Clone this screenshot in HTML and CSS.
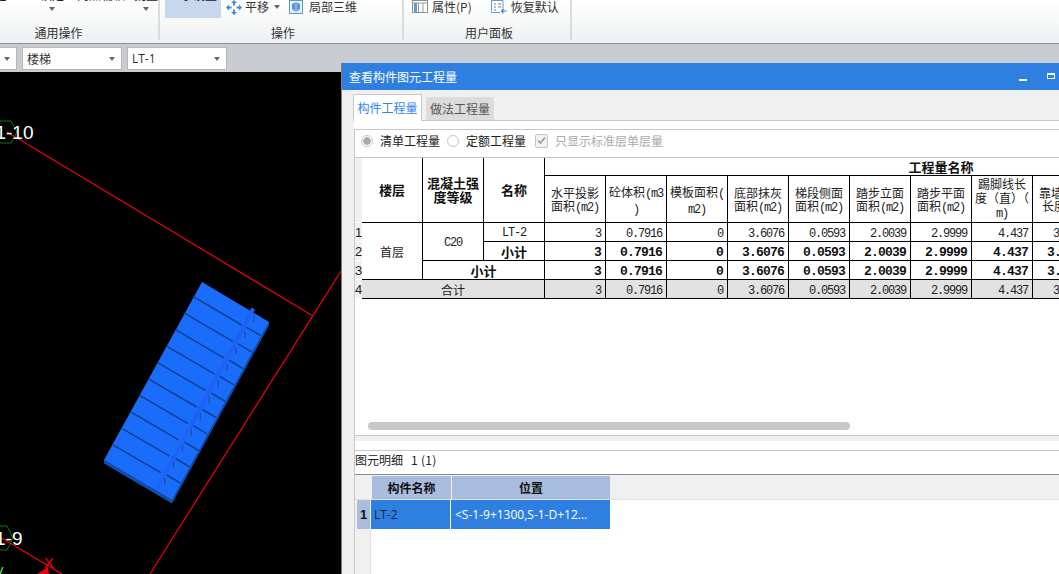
FILE: index.html
```html
<!DOCTYPE html>
<html lang="zh-CN">
<head>
<meta charset="utf-8">
<title>查看构件图元工程量</title>
<link rel="stylesheet" href="styles.css">
</head>
<body>
<div class="app">
  <header class="ribbon">
    <section class="group group-common">
      <div class="group-items clip-row">
        <div class="clip-item w-first"><span class="clip-text">定义</span></div>
        <div class="clip-item w-two"><span class="clip-text">锁定</span><i class="caret"></i></div>
        <div class="clip-item w-four"><span class="clip-text">两点辅轴</span></div>
        <div class="clip-item w-two"><span class="clip-text">批量</span><i class="caret"></i></div>
      </div>
      <div class="group-label">通用操作</div>
    </section>
    <section class="group group-ops">
      <div class="group-items">
        <div class="active-tool"><span class="clip-text">显示设置</span></div>
        <svg class="icon icon-move" width="16" height="15" viewBox="0 0 16 15"><path d="M8 0l3 3H5zM8 15l-3-3h6zM0 7.500l3-3v6zM16 7.500l-3 3v-6z" fill="#3f8ad6"/><path d="M8 3v2.500M8 9.500V12M3 7.500h2.500M10.500 7.500H13" stroke="#3f8ad6" stroke-width="2"/></svg>
        <span class="tool-text">平移</span>
        <i class="caret caret-inline"></i>
        <svg class="icon icon-local" width="14" height="14" viewBox="0 0 14 14"><rect x=".5" y=".5" width="13" height="13" fill="#e6f0fb" stroke="#5b9bd5"/><path d="M7 2l4 2v5l-4 3-4-3V4z" fill="#5b9bd5"/><path d="M7 2v10" stroke="#cfe2f6" stroke-width=".7"/></svg>
        <span class="tool-text">局部三维</span>
      </div>
      <div class="group-label">操作</div>
    </section>
    <section class="group group-panel">
      <div class="group-items">
        <svg class="icon icon-prop" width="16" height="13" viewBox="0 0 16 13"><rect x=".5" y=".5" width="15" height="12" fill="#fff" stroke="#8d8d8d"/><rect x="2" y="3" width="3" height="9" fill="#5b9bd5"/><path d="M1 3h14M6.500 3v9M11 3v9" stroke="#9a9a9a"/></svg>
        <span class="tool-text">属性(P)</span>
        <svg class="icon icon-reset" width="16" height="14" viewBox="0 0 16 14"><path d="M12 9V.5H.5v12H9" fill="#fff" stroke="#5b9bd5"/><path d="M3 4h2M7 4h3M3 7h2M7 7h3M3 10h2" stroke="#777"/><path d="M15.500 11H10.500M12.500 9l-2 2 2 2" fill="none" stroke="#2e7fe0" stroke-width="1.200"/></svg>
        <span class="tool-text">恢复默认</span>
      </div>
      <div class="group-label">用户面板</div>
    </section>
  </header>

  <div class="toolbar">
    <div class="combo combo-first"><i class="caret"></i></div>
    <div class="combo"><span>楼梯</span><i class="caret"></i></div>
    <div class="combo"><span class="latin">LT-1</span><i class="caret"></i></div>
  </div>

  <main class="canvas">
    <svg class="scene" width="341" height="502" viewBox="0 72 341 502">
      <path d="M7 132L313 316M341 271L150 574M0 537L62 574" fill="none" stroke="#f00012" stroke-width="1.200"/>
      <path d="M11 121L17 132L11 143H-1L-7 132L-1 121Z" fill="none" stroke="#0a7a12"/>
      <path d="M7 526L13 538L7 550H-5L-11 538L-5 526Z" fill="none" stroke="#0a7a12"/>
      <text class="axis" x="33.500" y="139" text-anchor="end">1-10</text>
      <text class="axis" x="22.500" y="545" text-anchor="end">1-9</text>
      <text class="axis-x" x="44" y="568">X</text>
      <path d="M48 567L37 574H49Z" fill="#f00012"/>
      <path d="M3 567L0 574" stroke="#35e020" stroke-width="1.500"/>
      <path d="M104 460L172 500L269 322V325.500L172 503.500L104 463.500Z" fill="#0f4fae"/>
      <path d="M202 282L269 322L172 500L104 460Z" fill="#1a6dfb"/>
      <path d="M193.300 296.700L241.700 325M184.400 313.200L232.700 341.400M175.500 329.700L223.700 357.800M166.600 346.200L214.700 374.200M157.700 362.700L205.700 390.600M148.900 379.200L196.700 407M140 395.700L187.700 423.400M131.100 412.200L178.700 439.800M122.200 428.700L169.700 456.200M113.300 445.200L160.700 472.600M246.700 327.300L260.700 335.700M237.800 343.700L251.800 352.100M228.900 360.100L242.900 368.500M220 376.500L234 384.900M211.100 392.900L225.100 401.300M202.200 409.300L216.200 417.700M193.300 425.700L207.300 434.100M184.400 442.100L198.400 450.500M175.500 458.500L189.500 466.900M166.600 474.900L180.600 483.300" fill="none" stroke="#0d408f" stroke-width="1.500"/>
      <path d="M253.700 315v6.700M244.800 331.300v6.700M235.900 347.600v6.700M227 363.900v6.700M218.100 380.200v6.700M209.200 396.500v6.700M200.300 412.800v6.700M191.400 429.100v6.700M182.500 445.400v6.700M173.600 461.700v6.700M164.700 478v6.700" fill="none" stroke="#1c4f96" stroke-width="1.200"/>
      <path d="M251.500 307.500L255 309.500L158 490.500L155.500 489Z" fill="#1f60f6"/>
    </svg>
  </main>

  <section class="window">
    <div class="win-title">
      <span>查看构件图元工程量</span>
      <span class="win-controls"><i class="win-min"></i><i class="win-max"></i></span>
    </div>
    <div class="win-body">
      <div class="tabs">
        <div class="tab tab-active">构件工程量</div>
        <div class="tab">做法工程量</div>
      </div>
      <div class="tab-panel">
        <div class="sheet">
          <div class="options">
            <label class="opt"><i class="radio radio-on"></i>清单工程量</label>
            <label class="opt"><i class="radio"></i>定额工程量</label>
            <label class="opt opt-off"><i class="check"><svg width="11" height="11" viewBox="0 0 11 11"><path d="M2 5.500L4.500 8L9 2.500" fill="none" stroke="#9a9a9a" stroke-width="1.600"/></svg></i>只显示标准层单层量</label>
          </div>
          <div class="grid-wrap">
            <table class="qty">
              <colgroup><col class="col-rn"><col class="col-c" span="16"></colgroup>
              <tr class="h1">
                <td class="rn" rowspan="2"></td>
                <th rowspan="2">楼层</th>
                <th rowspan="2">混凝土强<br>度等级</th>
                <th rowspan="2">名称</th>
                <th colspan="13">工程量名称</th>
              </tr>
              <tr class="h2">
                <td>水平投影<br>面积<span class="lat">(m2)</span></td>
                <td>砼体积<span class="lat">(m3</span><br><span class="lat">)</span></td>
                <td>模板面积<span class="lat">(</span><br><span class="lat">m2)</span></td>
                <td>底部抹灰<br>面积<span class="lat">(m2)</span></td>
                <td>梯段侧面<br>面积<span class="lat">(m2)</span></td>
                <td>踏步立面<br>面积<span class="lat">(m2)</span></td>
                <td>踏步平面<br>面积<span class="lat">(m2)</span></td>
                <td class="tall">踢脚线长<br>度（直）（<br><span class="lat">m)</span></td>
                <td>靠墙扶手<br>长度<span class="lat">(m)</span></td>
                <td colspan="4"></td>
              </tr>
              <tr class="r">
                <td class="rn">1</td>
                <td class="cn" rowspan="3">首层</td>
                <td class="lat cen" rowspan="2">C20</td>
                <td class="lat cen">LT-2</td>
                <td class="num">3</td><td class="num">0.7916</td><td class="num">0</td><td class="num">3.6076</td><td class="num">0.0593</td><td class="num">2.0039</td><td class="num">2.9999</td><td class="num">4.437</td><td class="num">3.0000</td><td colspan="4"></td>
              </tr>
              <tr class="r b">
                <td class="rn">2</td>
                <th>小计</th>
                <td class="num">3</td><td class="num">0.7916</td><td class="num">0</td><td class="num">3.6076</td><td class="num">0.0593</td><td class="num">2.0039</td><td class="num">2.9999</td><td class="num">4.437</td><td class="num">3.0000</td><td colspan="4"></td>
              </tr>
              <tr class="r b">
                <td class="rn">3</td>
                <th colspan="2">小计</th>
                <td class="num">3</td><td class="num">0.7916</td><td class="num">0</td><td class="num">3.6076</td><td class="num">0.0593</td><td class="num">2.0039</td><td class="num">2.9999</td><td class="num">4.437</td><td class="num">3.0000</td><td colspan="4"></td>
              </tr>
              <tr class="r total">
                <td class="rn">4</td>
                <td class="cn" colspan="3">合计</td>
                <td class="num">3</td><td class="num">0.7916</td><td class="num">0</td><td class="num">3.6076</td><td class="num">0.0593</td><td class="num">2.0039</td><td class="num">2.9999</td><td class="num">4.437</td><td class="num">3.0000</td><td colspan="4"></td>
              </tr>
            </table>
            <div class="scrollbar"></div>
          </div>
          <div class="band"></div>
          <div class="spacer"></div>
          <div class="detail-title"><span>图元明细</span><span class="detail-count">1 (1)</span></div>
          <div class="detail">
            <div class="d-corner"></div>
            <div class="d-head"><b>构件名称</b></div>
            <div class="d-head"><b>位置</b></div>
            <div class="d-fill"></div>
            <div class="d-rownum"><b>1</b></div>
            <div class="d-cell d-name">LT-2</div>
            <div class="d-cell d-pos">&lt;S-1-9+1300,S-1-D+12...</div>
            <div class="d-blank"></div>
            <div class="d-stripe"></div>
          </div>
        </div>
      </div>
    </div>
  </section>
</div>
</body>
</html>
```

FILE: styles.css
```css
* { box-sizing: border-box; }
html, body { margin: 0; padding: 0; height: 100%; overflow: hidden; }
body { font-family: "Noto Sans CJK SC", "Liberation Sans", sans-serif; font-size: 12px; color: #222; }
i { display: block; font-style: normal; }

.app { position: relative; width: 1059px; height: 574px; overflow: hidden; display: flex; flex-direction: column; background: #000; }

/* ribbon */
.ribbon { height: 44px; flex: none; display: flex; background: linear-gradient(#ffffff, #eef0f1); border-bottom: 1px solid #8e9194; overflow: hidden; }
.group { height: 40px; flex: none; display: flex; flex-direction: column; border-right: 2px solid #d9dbdd; }
.group-common { width: 201px; margin-left: -41px; }
.group-ops { width: 244px; }
.group-panel { width: 168px; }
.group-items { height: 25px; display: flex; align-items: flex-start; line-height: 13px; overflow: hidden; }
.group-label { text-align: center; line-height: 15px; color: #333; }
.group-ops .group-label, .group-panel .group-label { padding-left: 4px; }

.clip-row { padding-left: 25px; }
.clip-item { display: flex; flex-direction: column; align-items: center; }
.clip-text { display: block; margin-top: -12px; white-space: nowrap; color: #222; }
.w-first { width: 48px; }
.w-two { width: 24px; margin-left: 11px; }
.w-two:last-child { margin-left: 9px; }
.w-four { width: 48px; margin-left: 13px; }
.caret { width: 0; height: 0; border: 3.500px solid transparent; border-top: 4px solid #666; border-bottom: 0; margin-top: 6px; }

.group-ops .group-items { padding-left: 5px; }
.active-tool { width: 56px; height: 18px; background: #c6d7ee; text-align: center; overflow: hidden; flex: none; }
.icon { flex: none; display: block; }
.icon-move { margin: 0 3px 0 5px; }
.tool-text { white-space: nowrap; color: #333; }
.caret-inline { margin: 5px 0 0 5px; }
.icon-local { margin: 0 6px 0 9px; }
.group-panel .group-items { padding-left: 8px; }
.icon-prop { margin-right: 4px; }
.icon-reset { margin: 0 4px 0 19px; }

/* toolbar */
.toolbar { height: 28px; flex: none; display: flex; gap: 5px; padding-top: 3px; background: #c9ccd1; align-items: flex-start; }
.combo { width: 100px; height: 23px; padding: 0 4px; background: #fff; border: 1px solid #b5b7ba; display: flex; align-items: center; justify-content: space-between; line-height: 21px; color: #333; }
.combo .caret { margin: 0 2px 0 0; }
.combo-first { width: 17px; border-left: 0; justify-content: flex-end; }
.latin { font-family: "Open Sans", sans-serif; }

/* canvas */
.canvas { flex: 1; background: #000; overflow: hidden; }
.scene { display: block; }
.axis { font-family: "Liberation Sans", sans-serif; font-size: 19px; fill: #fff; }
.axis-x { font-family: "Liberation Sans", sans-serif; font-size: 15px; fill: #f00012; }

/* window */
.window { position: absolute; left: 341px; top: 63px; width: 718px; height: 511px; display: flex; flex-direction: column; background: #f0f0f0; border-left: 1px solid #7d7d7d; overflow: hidden; }
.win-title { height: 27px; flex: none; display: flex; align-items: center; justify-content: space-between; padding-left: 7px; background: #2e7fe0; color: #fff; }
.win-controls { display: flex; align-items: flex-start; gap: 20px; padding-right: 4px; }
.win-min { width: 8px; height: 2px; background: #fff; margin-top: 6px; }
.win-max { width: 8px; height: 6px; border: 1px solid #fff; border-top-width: 2px; }
.win-body { flex: 1; display: flex; flex-direction: column; padding-left: 12px; min-height: 0; }
.tabs { height: 30px; flex: none; display: flex; align-items: flex-end; gap: 4px; margin-left: -1px; }
.tab { width: 68px; height: 23px; background: #dcdcdc; color: #555; text-align: center; line-height: 23px; border-radius: 2px 2px 0 0; }
.tab-active { width: 69px; height: 27px; margin-bottom: -1px; position: relative; background: #fff; color: #2e86ee; line-height: 25px; border: 1px solid #c8c8c8; border-bottom: 0; }
.tab-panel { flex: 1; display: flex; flex-direction: column; min-height: 0; background: #fff; border-top: 1px solid #c8c8c8; padding-top: 8px; }
.sheet { flex: 1; display: flex; flex-direction: column; min-height: 0; border-top: 1px solid #c8c8c8; border-left: 1px solid #c8c8c8; }

.options { height: 27px; flex: none; display: flex; align-items: center; padding: 0 0 6px 6px; }
.opt { display: flex; align-items: center; color: #222; }
.radio { width: 12px; height: 12px; margin-right: 7px; border-radius: 50%; border: 1px solid #c4c4c4; background: #fff; }
.radio-on { background: radial-gradient(circle, #a8a8a8 0 3.500px, #fff 4px); }
.opt + .opt { margin-left: 7px; }
.opt + .opt-off { margin-left: 9px; color: #aaa; }
.check { width: 13px; height: 14px; margin-right: 7px; border: 1px solid #c4c4c4; border-radius: 2px; background: #f2f2f2; display: flex; align-items: center; justify-content: center; }

.grid-wrap { height: 279px; flex: none; display: flex; flex-direction: column; border-top: 1px solid #c8c8c8; border-bottom: 1px solid #c8c8c8; overflow: hidden; }
.qty { flex: none; table-layout: fixed; width: 983px; border-collapse: separate; border-spacing: 0; font-family: "Liberation Mono", "Noto Sans CJK SC", monospace; font-size: 12px; color: #222; }
.col-rn { width: 7px; }
.col-c { width: 61px; }
.qty td, .qty th { padding: 0; border-right: 1px solid #000; border-bottom: 1px solid #000; text-align: center; vertical-align: middle; overflow: visible; }
.qty th { font-family: "Noto Sans CJK SC", sans-serif; font-size: 13px; font-weight: 700; line-height: 14px; color: #111; }
.h1 { height: 18px; }
.h2 { height: 47px; }
.h2 td { line-height: 13px; padding-top: 3px; font-family: "Noto Sans CJK SC", sans-serif; white-space: nowrap; }
.qty .h2 td.tall { line-height: 14px; padding-top: 0; }
.r { height: 19px; }
.r td, .r th { line-height: 14px; }
.qty .r td { padding-top: 2px; }
.qty .r th, .qty .r td.cn { padding-top: 1px; }
.qty .r td.num { padding-top: 3px; }
.qty td.rn { border-right: 0; border-bottom: 1px solid #fff; background: #f0f0f0; text-align: left; font-family: "Liberation Sans", sans-serif; font-size: 13px; overflow: hidden; }
.qty .r td.rn { padding-top: 1px; }
.cn { font-family: "Noto Sans CJK SC", sans-serif; }
.lat { font-family: "Liberation Mono", monospace; letter-spacing: -1.200px; }
.qty td.num { text-align: right; padding-right: 4px; letter-spacing: -1.200px; }
.qty .b .num { font-size: 13px; font-weight: 700; color: #111; letter-spacing: -0.800px; }
.total td { background: #e2e2e2; }
.qty .total td.rn { background: #f0f0f0; }

.scrollbar { flex: none; width: 482px; height: 8px; margin: auto 0 5px 13px; border-radius: 4px; background: #c8c8c8; }
.band { height: 5px; flex: none; background: #f0f0f0; }
.spacer { height: 9px; flex: none; background: #fff; }
.detail-title { height: 24px; flex: none; display: flex; align-items: center; gap: 8px; padding: 0 0 6px 0; border-top: 1px solid #c8c8c8; }
.detail-count { letter-spacing: .3px; }
.detail { flex: 1; display: grid; grid-template-columns: 16px 80px 159px 1fr; grid-template-rows: 25px 30px 1fr; border-top: 1px solid #7f8a99; min-height: 0; }
.d-corner, .d-head, .d-fill { background: #f0f0f0; border-bottom: 1px solid #e2e2e2; }
.d-head { padding: 1px 0 0 1px; }
.d-head b { display: flex; align-items: center; justify-content: center; height: 23px; background: #a8bddd; font-weight: 700; color: #111; }
.d-rownum { padding-left: 2px; background: #f0f0f0; }
.d-rownum b { display: flex; align-items: center; justify-content: center; height: 29px; width: 13px; background: #a8bddd; font-family: "Liberation Sans", sans-serif; font-size: 13px; color: #111; }
.d-cell { height: 29px; display: flex; align-items: center; background: #2e7fe0; white-space: nowrap; font-family: "Open Sans", sans-serif; }
.d-name { padding-left: 3px; border-right: 1px solid #fff; color: #14233a; }
.d-pos { padding-left: 4px; color: #fff; }
.d-stripe { grid-column: 1; background: #f0f0f0; border-right: 1px solid #e2e2e2; }
```
